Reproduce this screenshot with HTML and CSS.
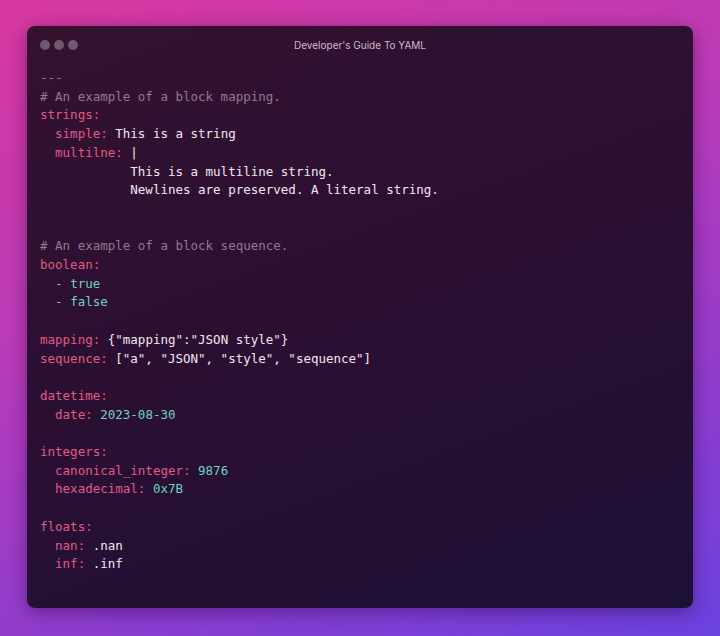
FILE: index.html
```html
<!DOCTYPE html>
<html>
<head>
<meta charset="utf-8">
<link rel="stylesheet" href="styles.css">
</head>
<body>
<div class="window">
  <div class="titlebar">
    <div class="dots"><span class="dot"></span><span class="dot"></span><span class="dot"></span></div>
    <div class="title">Developer's Guide To YAML</div>
  </div>
<pre class="code"><span class="c">---</span>
<span class="c"># An example of a block mapping.</span>
<span class="k">strings:</span>
  <span class="k">simple:</span> <span class="s">This is a string</span>
  <span class="k">multilne:</span> <span class="s">|</span>
            <span class="s">This is a multiline string.</span>
            <span class="s">Newlines are preserved. A literal string.</span>


<span class="c"># An example of a block sequence.</span>
<span class="k">boolean:</span>
  <span class="d">-</span> <span class="n">true</span>
  <span class="d">-</span> <span class="n">false</span>

<span class="k">mapping:</span> <span class="s">{"mapping":"JSON style"}</span>
<span class="k">sequence:</span> <span class="s">["a", "JSON", "style", "sequence"]</span>

<span class="k">datetime:</span>
  <span class="k">date:</span> <span class="n">2023-08-30</span>

<span class="k">integers:</span>
  <span class="k">canonical_integer:</span> <span class="n">9876</span>
  <span class="k">hexadecimal:</span> <span class="n">0x7B</span>

<span class="k">floats:</span>
  <span class="k">nan:</span> <span class="s">.nan</span>
  <span class="k">inf:</span> <span class="s">.inf</span></pre>
</div>
</body>
</html>
```
FILE: styles.css
```css
html, body {
  margin: 0;
  padding: 0;
}
body {
  width: 720px;
  height: 636px;
  overflow: hidden;
  background: linear-gradient(160deg, #d8389f 0%, #b93bb9 40%, #8b3ccf 75%, #6a42e0 100%);
  padding: 26px 27px 0 27px;
  box-sizing: border-box;
}
.window {
  width: 666px;
  height: 582px;
  border-radius: 8px;
  background: linear-gradient(160deg, #34112f 0%, #2a0f33 50%, #1d1036 100%);
  box-shadow: 0 4px 18px rgba(40, 0, 60, 0.45);
  position: relative;
}
.titlebar {
  height: 38px;
  display: flex;
  align-items: center;
  position: relative;
  padding-left: 13px;
}
.dots {
  display: flex;
  gap: 4px;
}
.dot {
  width: 10px;
  height: 10px;
  border-radius: 50%;
  background: #6e5a6c;
}
.title {
  position: absolute;
  left: 0;
  right: 0;
  top: 0;
  line-height: 38px;
  text-align: center;
  font-family: "Inter", "Liberation Sans", sans-serif;
  font-size: 10px;
  color: #cdbccb;
}
.code {
  margin: 0;
  padding: 5px 0 0 13px;
  font-family: "DejaVu Sans Mono", monospace;
  font-size: 12.5px;
  line-height: 18.7px;
  color: #f2e6f0;
}
.c { color: #95788e; }
.k { color: #e35a87; }
.s { color: #f3e8f1; }
.n { color: #6fd3bf; }
.d { color: #c7a4bd; }
```
